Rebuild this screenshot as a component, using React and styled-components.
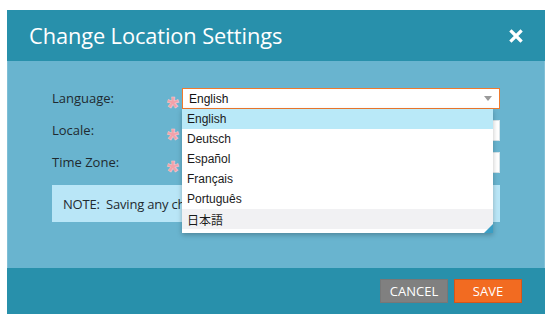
import React from "react";
import styled, { createGlobalStyle } from "styled-components";

const Global = createGlobalStyle`
  html, body { margin: 0; padding: 0; background: #ffffff; }
  body { font-family: "Open Sans", "Liberation Sans", sans-serif; }
`;

const Page = styled.div`
  padding: 10px 6px 8px 7px;
`;

const Dialog = styled.div`
  width: 538px;
  display: flex;
  flex-direction: column;
  background: #69b4cf;
  box-shadow: 0 0 0 1px rgba(255,255,255,0.15) inset;
`;

const Header = styled.div`
  height: 51px;
  background: #2890ab;
  display: flex;
  align-items: center;
  justify-content: space-between;
  padding: 0 22px 0 22px;
  box-sizing: border-box;
`;

const Title = styled.h1`
  margin: 0;
  font-family: "Open Sans", sans-serif;
  font-weight: 400;
  font-size: 21.8px;
  color: #ffffff;
  letter-spacing: -0.1px;
`;

const CloseButton = styled.button`
  border: 0;
  background: none;
  padding: 0;
  width: 14px;
  height: 14px;
  display: flex;
  cursor: pointer;
`;

const Body = styled.div`
  height: 207px;
  box-sizing: border-box;
  padding: 27px 45px 0 45px;
  display: flex;
  flex-direction: column;
`;

const Form = styled.div`
  display: grid;
  grid-template-columns: 115px 15px 318px;
  grid-template-rows: 21px 21px 21px;
  row-gap: 11px;
  align-items: center;
`;

const Label = styled.label`
  font-family: "Open Sans", sans-serif;
  font-size: 13px;
  color: #1f2a30;
  margin-top: -1px;
`;

const Required = styled.span`
  font-family: "Liberation Sans", sans-serif;
  font-size: 30px;
  font-weight: 700;
  line-height: 1;
  height: 21px;
  color: #f3a1a9;
  padding-top: 7px;
  justify-self: start;
  -webkit-text-stroke: 0.5px #f8c9cd;
`;

const SelectWrap = styled.div`
  position: relative;
  height: 21px;
`;

const SelectBox = styled.div`
  height: 21px;
  box-sizing: border-box;
  background: #ffffff;
  border: 1px solid ${(p) => (p.$focused ? "#f07a2d" : "#d7e3e8")};
  display: flex;
  align-items: center;
  justify-content: space-between;
  padding: 0 6px 0 6px;
  font-family: "Liberation Sans", Arial, sans-serif;
  font-size: 12px;
  color: #111;
`;

const Arrow = styled.span`
  width: 0;
  height: 0;
  border-left: 4px solid transparent;
  border-right: 4px solid transparent;
  border-top: 5px solid #9a9a9a;
  margin-right: 1px;
`;

const List = styled.ul`
  position: absolute;
  top: 21px;
  left: 0;
  width: 311px;
  margin: 0;
  padding: 0 0 4px 0;
  list-style: none;
  background: #ffffff;
  box-shadow: 0 2px 5px rgba(0, 0, 0, 0.25);
  z-index: 5;
`;

const Option = styled.li`
  height: 20px;
  display: flex;
  align-items: center;
  padding-left: 5px;
  font-family: "Liberation Sans", Arial, "Noto Sans CJK JP", sans-serif;
  font-size: 12px;
  color: #1a1a1a;
  background: ${(p) => (p.$selected ? "#b9e9f8" : p.$hover ? "#f1f1f3" : "#ffffff")};
`;

const Grip = styled.span`
  position: absolute;
  right: 0;
  bottom: 0;
  width: 0;
  height: 0;
  border-left: 9px solid transparent;
  border-bottom: 9px solid #3a9ec4;
`;

const Note = styled.div`
  margin-top: 12px;
  width: 448px;
  height: 37px;
  box-sizing: border-box;
  background: #b9e6f7;
  display: flex;
  align-items: center;
  padding-left: 11px;
  font-family: "Open Sans", sans-serif;
  font-size: 13px;
  letter-spacing: -0.2px;
  color: #1f2a30;
  white-space: pre;
  overflow: hidden;
`;

const Footer = styled.div`
  height: 46px;
  background: #2890ab;
  display: flex;
  align-items: center;
  justify-content: flex-end;
  gap: 6px;
  padding: 0 23px 0 0;
  box-sizing: border-box;
`;

const Button = styled.button`
  width: 68px;
  height: 24px;
  box-sizing: border-box;
  border: 1px solid ${(p) => (p.$primary ? "#d4561a" : "#777777")};
  background: ${(p) => (p.$primary ? "#f26b21" : "#808080")};
  color: #ffffff;
  font-family: "Open Sans", sans-serif;
  font-size: 13px;
  text-transform: uppercase;
  padding: 0;
  cursor: pointer;
`;

const languages = ["English", "Deutsch", "Español", "Français", "Português", "日本語"];

export default function App() {
  return (
    <>
      <Global />
      <Page>
        <Dialog>
          <Header>
            <Title>Change Location Settings</Title>
            <CloseButton aria-label="Close">
              <svg width="14" height="14" viewBox="0 0 14 14">
                <path d="M2.5 2.5 L11.5 11.5 M11.5 2.5 L2.5 11.5" stroke="#fff" strokeWidth="3.2" strokeLinecap="square" />
              </svg>
            </CloseButton>
          </Header>
          <Body>
            <Form>
              <Label>Language:</Label>
              <Required>*</Required>
              <SelectWrap>
                <SelectBox $focused>
                  <span>English</span>
                  <Arrow />
                </SelectBox>
                <List>
                  {languages.map((l, i) => (
                    <Option key={l} $selected={i === 0} $hover={i === 5}>
                      {l}
                    </Option>
                  ))}
                  <Grip />
                </List>
              </SelectWrap>
              <Label>Locale:</Label>
              <Required>*</Required>
              <SelectWrap>
                <SelectBox />
              </SelectWrap>
              <Label>Time Zone:</Label>
              <Required>*</Required>
              <SelectWrap>
                <SelectBox />
              </SelectWrap>
            </Form>
            <Note>NOTE:  Saving any changes will update your location settings.</Note>
          </Body>
          <Footer>
            <Button>Cancel</Button>
            <Button $primary>Save</Button>
          </Footer>
        </Dialog>
      </Page>
    </>
  );
}
